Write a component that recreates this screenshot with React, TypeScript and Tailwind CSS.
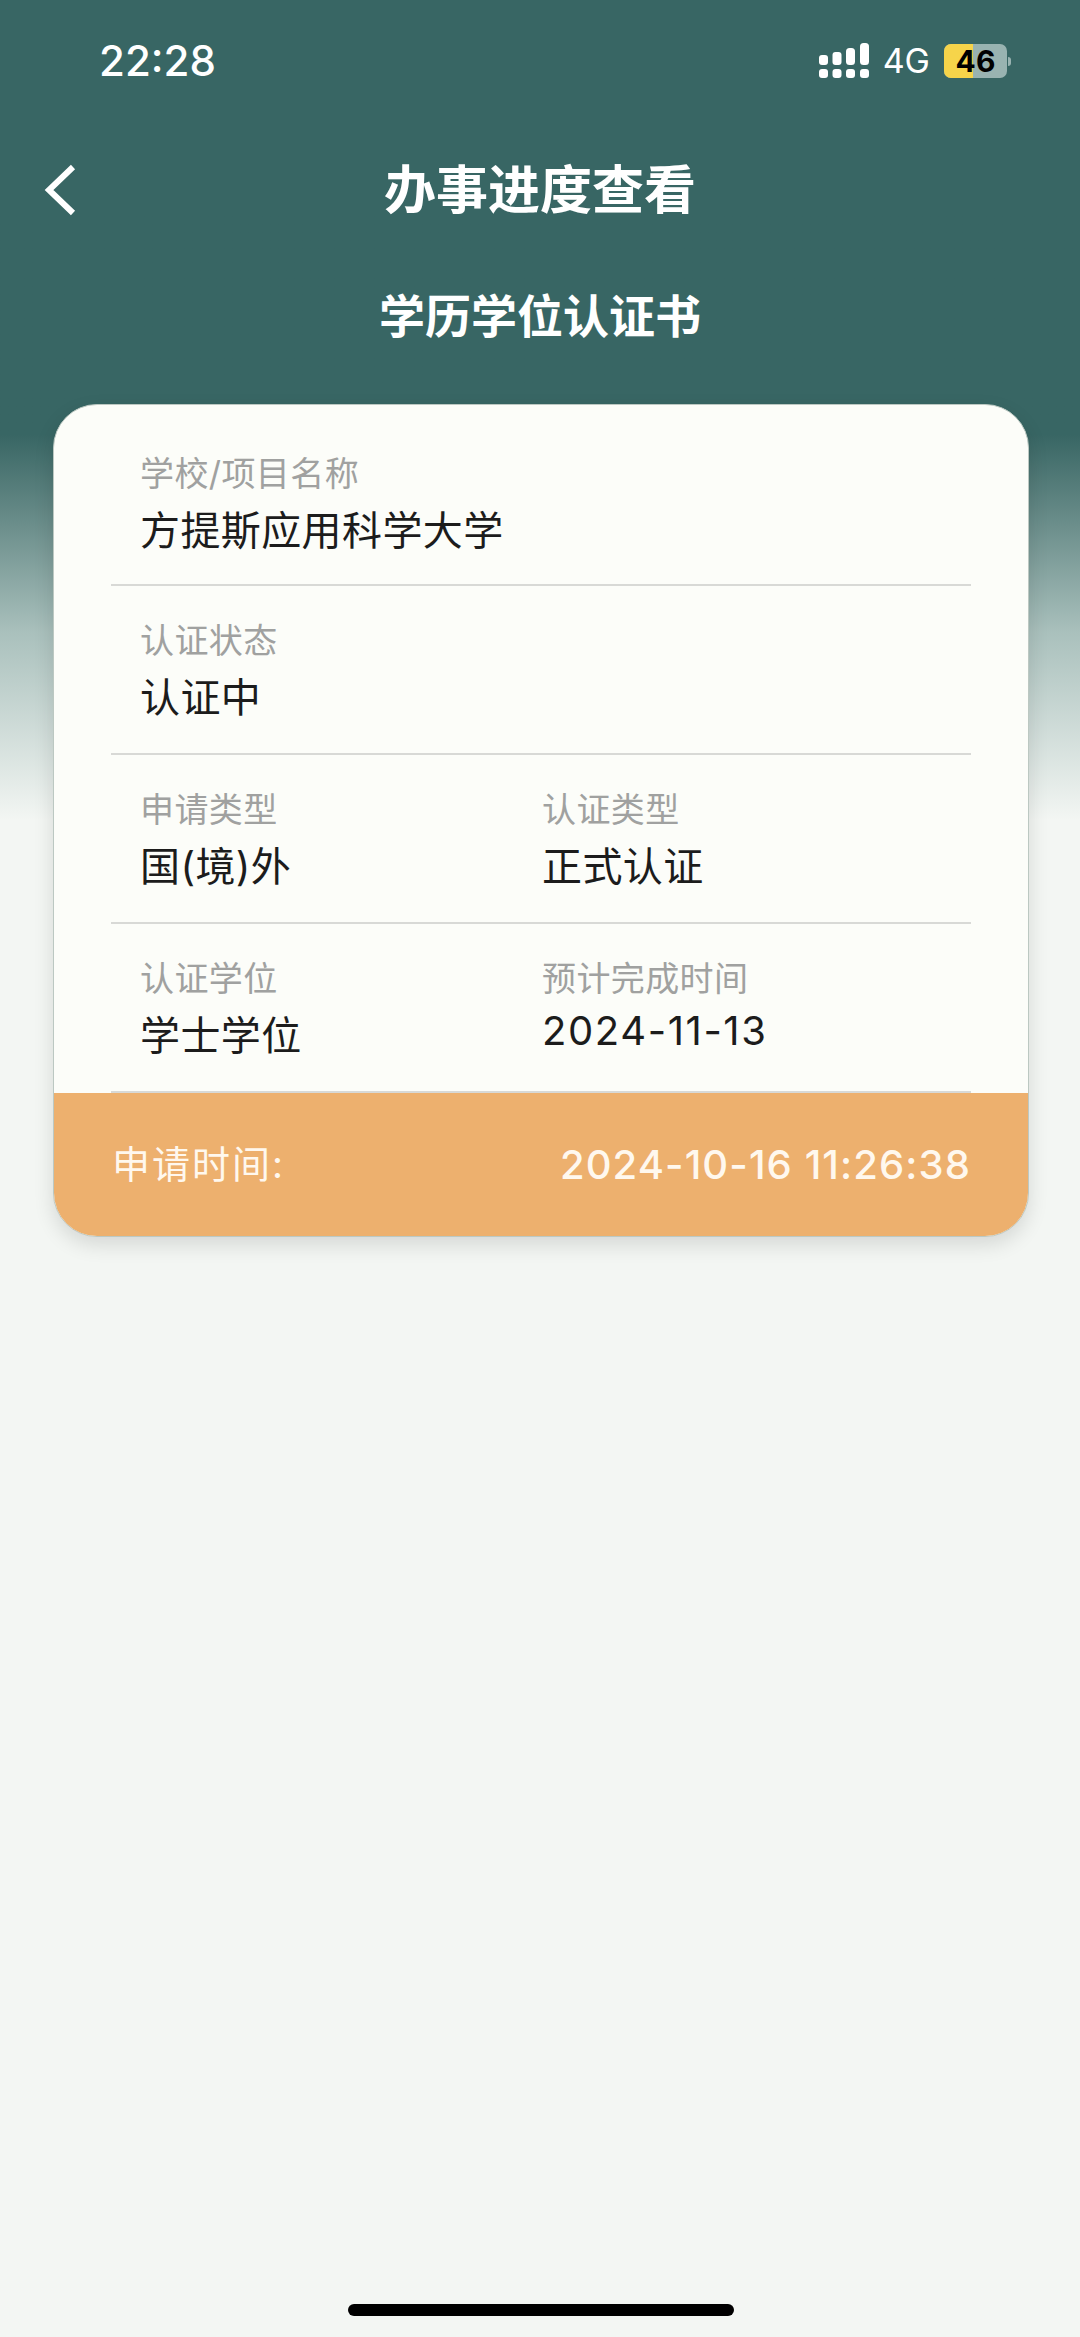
const cjk = "font-['Inter','Noto_Sans_CJK_SC',sans-serif]";

function SignalIcon() {
  return (
    <svg width="50" height="36" viewBox="0 0 50 36" fill="white">
      <rect x="0" y="12" width="9" height="10" rx="3" />
      <rect x="13.5" y="9" width="9" height="13" rx="3" />
      <rect x="27" y="5" width="9" height="17" rx="3.5" />
      <rect x="41" y="0" width="9" height="22" rx="3.5" />
      <rect x="0" y="26" width="9" height="9" rx="3" />
      <rect x="13.5" y="26" width="9" height="9" rx="3" />
      <rect x="27" y="26" width="9" height="9" rx="3" />
      <rect x="41" y="26" width="9" height="9" rx="3" />
    </svg>
  );
}

function Battery() {
  return (
    <div className="flex items-center">
      <div className="relative flex h-[34px] w-[63px] items-center justify-center overflow-hidden rounded-[7px] bg-[#99b3b1]">
        <div className="absolute inset-y-0 left-0 w-[29px] bg-[#f6d44a]" />
        <span className="relative text-[30px] leading-none font-bold text-black">46</span>
      </div>
      <div className="ml-[1px] h-[9px] w-[3px] rounded-r-full bg-[#99b3b1]" />
    </div>
  );
}

function Field({ label, value, className = "", numeric = false }: { label: string; value: string; className?: string; numeric?: boolean }) {
  return (
    <div className={className}>
      <p className="text-[34px] leading-[50px] tracking-[0.4px] text-[#a0a1a0]">{label}</p>
      {numeric ? (
        <p className="mt-[-2px] text-[40px] leading-[58px] tracking-[1.6px] text-[#1c1c1c]">{value}</p>
      ) : (
        <p className="mt-[3px] text-[40px] leading-[58px] tracking-[0.4px] text-[#1c1c1c]">{value}</p>
      )}
    </div>
  );
}

function Row({ children }: { children: React.ReactNode }) {
  return <div className="flex h-[169px] border-b-2 border-[#d8d9d6] pt-[30px] pl-[29px]">{children}</div>;
}

export default function App() {
  return (
    <div className={`relative h-[2337px] w-[1080px] overflow-hidden bg-[#f3f6f3] ${cjk}`}>
      <div className="h-[820px] bg-gradient-to-b from-[#386664] from-[53%] via-[#a9c0bc] via-[77%] to-[#f3f6f3]">
        {/* status bar */}
        <div className="flex h-[122px] items-center justify-between pr-[69px] pl-[99px] text-white">
          <span className="text-[42px] leading-none font-medium">22:28</span>
          <div className="flex items-center gap-[14px]">
            <SignalIcon />
            <span className="text-[34px] leading-none">4G</span>
            <Battery />
          </div>
        </div>

        {/* nav */}
        <div className="relative flex h-[138px] items-center justify-center">
          <svg className="absolute top-[42px] left-[44px]" width="32" height="52" viewBox="0 0 32 52" fill="none">
            <path d="M29 3 L5 26 L29 49" stroke="white" strokeWidth="6" />
          </svg>
          <h1 className="text-[52px] leading-none font-bold text-white">办事进度查看</h1>
        </div>

        <h2 className="mt-[26px] text-center text-[46px] leading-[60px] font-bold text-white">学历学位认证书</h2>
      </div>

      {/* card */}
      <div className="absolute top-[404px] left-[53px] w-[976px] overflow-hidden rounded-[44px] border border-[#bcc8c2] bg-[#fcfdf9] shadow-[0_8px_20px_rgba(0,0,0,0.12)]">
        <div className="px-[57px]">
          <div className="flex h-[181px] border-b-2 border-[#d8d9d6] pt-[44px] pl-[29px]">
            <Field label="学校/项目名称" value="方提斯应用科学大学" />
          </div>
          <Row>
            <Field label="认证状态" value="认证中" />
          </Row>
          <Row>
            <Field className="w-[402px]" label="申请类型" value="国(境)外" />
            <Field label="认证类型" value="正式认证" />
          </Row>
          <Row>
            <Field className="w-[402px]" label="认证学位" value="学士学位" />
            <Field numeric label="预计完成时间" value="2024-11-13" />
          </Row>
        </div>
        <div className="flex h-[143px] items-center justify-between bg-[#edb06e] pr-[57px] pl-[58px] text-[#fff8ee]">
          <span className="text-[38px] tracking-[2px]">申请时间:</span>
          <span className="text-[40px] font-medium tracking-[1.1px]">2024-10-16 11:26:38</span>
        </div>
      </div>

      {/* home indicator */}
      <div className="absolute bottom-[21px] left-[348px] h-[12px] w-[386px] rounded-full bg-black" />
    </div>
  );
}
